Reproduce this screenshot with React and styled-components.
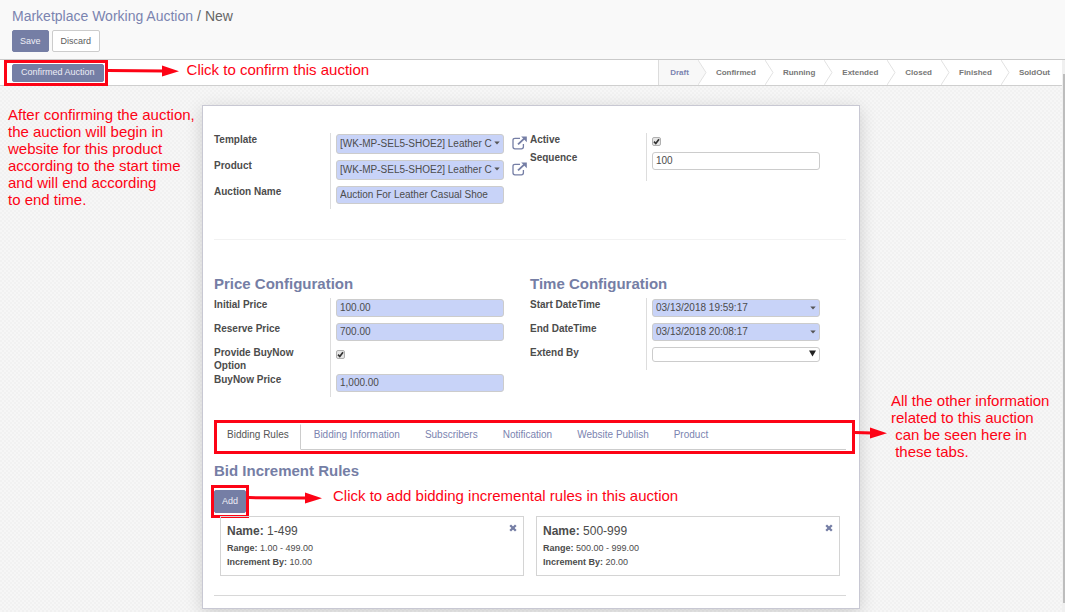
import React from 'react';
import styled, { createGlobalStyle } from 'styled-components';

const button = '#757ea5';
const red = '#fd0315';

const GlobalStyle = createGlobalStyle`
  * { box-sizing: border-box; }
  body {
    margin: 0;
    background: #f4f4f4;
    color: #4c4c4c;
    font-family: "Liberation Sans", Arial, sans-serif;
    font-size: 10px;
    line-height: 13px;
  }
  button, input, select { font: inherit; color: inherit; margin: 0; }
`;

const Shell = styled.div`
  display: flex;
  flex-direction: column;
  min-height: 100vh;
`;

const Header = styled.header`
  display: flex;
  flex-direction: column;
  gap: 5px;
  padding: 8px 12px 7px;
  background: #f9f9f9;
  border-bottom: 1px solid #cacaca;
`;

const Breadcrumb = styled.nav`
  display: flex;
  gap: 4px;
  font-size: 14px;
  line-height: 17px;
  color: #666;
  a { color: #7b84b0; text-decoration: none; }
`;

const Actions = styled.div`
  display: flex;
  gap: 3px;
`;

const Button = styled.button`
  height: ${(p) => p.$height || 22}px;
  padding: 0 ${(p) => p.$pad || 7}px;
  border: 1px solid ${(p) => (p.$plain ? '#ccc' : button)};
  border-radius: 2px;
  background: ${(p) => (p.$plain ? '#fff' : button)};
  color: ${(p) => (p.$plain ? '#5c5c5c' : '#eeeef6')};
  font-size: 9px;
  line-height: 11px;
  white-space: nowrap;
`;

const Scroller = styled.div`
  flex: 1;
  display: grid;
  grid-template-columns: minmax(0, 1fr) 3px;
`;

const Track = styled.div`
  background: #f0f0f0;
  padding: 14px 0 9px 1px;
  display: flex;
`;

const Thumb = styled.div`
  flex: 1;
  background: #bdbdbd;
`;

const Body = styled.div`
  display: flex;
  flex-direction: column;
`;

const StatusBar = styled.div`
  display: flex;
  justify-content: space-between;
  align-items: stretch;
  height: 26px;
  padding-left: 12px;
  background: #fff;
  border-bottom: 1px solid #cfcfcf;
`;

const StatusActions = styled.div`
  display: flex;
  align-items: center;
`;

const Marked = styled.div`
  position: relative;
  display: flex;
`;

const Frame = styled.div`
  position: absolute;
  inset: ${(p) => p.$inset};
  border: 3px solid ${red};
  pointer-events: none;
`;

const Callout = styled.div`
  position: absolute;
  left: calc(100% + ${(p) => p.$offset}px);
  top: -3px;
  display: flex;
  align-items: center;
  gap: ${(p) => p.$gap}px;
  color: ${red};
  font-size: 15px;
  line-height: 17px;
  white-space: nowrap;
  svg { display: block; flex: none; }
  p { margin: 0 0 4px; }
`;

const Steps = styled.ol`
  display: flex;
  margin: 0;
  padding: 0;
  list-style: none;
  border-left: 1px solid #dcdcdc;
  font-size: 8px;
  font-weight: bold;
  color: #777;
`;

const Step = styled.li`
  display: flex;
  align-items: stretch;
  background: #fff;
  color: ${(p) => (p.$first ? '#7b84b0' : 'inherit')};
`;

const StepName = styled.span`
  display: flex;
  align-items: center;
  padding: 0 ${(p) => (p.$last ? 12 : 9)}px 0 ${(p) => (p.$first ? 11 : 9)}px;
  background: ${(p) => (p.$first ? '#f8f8f8' : '#fff')};
`;

const Chevron = styled.svg`
  display: block;
  flex: none;
  width: 9px;
  height: 25px;
`;

const Canvas = styled.main`
  flex: 1;
  display: grid;
  grid-template-columns: minmax(0, 1fr) 658px minmax(0, 1fr);
  align-items: start;
  padding: 19px 0 3px;
  background: repeating-conic-gradient(#f1f1f1 0 25%, #f6f6f6 0 50%) 0 0 / 4px 4px;
`;

const Note = styled.aside`
  position: relative;
  color: ${red};
  font-size: 15px;
  line-height: 17px;
  white-space: pre;
  padding: ${(p) => p.$pad};
`;

const NoteArrow = styled.div`
  position: absolute;
  left: -5px;
  top: 322px;
  svg { display: block; }
`;

const Sheet = styled.section`
  min-height: 504px;
  padding: 27px 13px 12px 11px;
  background: #fff;
  border: 1px solid #c8c8d3;
  box-shadow: 0 4px 16px rgba(0, 0, 0, 0.16);
`;

const Columns = styled.div`
  display: grid;
  grid-template-columns: 1fr 1fr;
  align-items: start;
`;

const Group = styled.div`
  display: flex;
  flex-direction: column;
`;

const Row = styled.div`
  display: grid;
  grid-template-columns: 116px minmax(0, 1fr);
  label { font-weight: bold; padding-bottom: 1px; padding-right: 30px; }
`;

const Field = styled.div`
  display: flex;
  align-items: flex-start;
  gap: 8px;
  padding: 1px 0 ${(p) => p.$bottom || 5}px 5px;
  border-left: 1px solid #ddd;
`;

const Control = styled.div`
  position: relative;
  width: 168px;
`;

const TextInput = styled.input`
  display: block;
  width: 100%;
  height: ${(p) => p.$height || 18}px;
  padding: 0 3px 2px;
  border: 1px solid #ccc;
  border-radius: 3px;
  background: ${(p) => (p.$required ? '#c8d3f8' : '#fff')};
`;

const Select = styled.select`
  display: block;
  appearance: none;
  width: 100%;
  height: 15px;
  padding: 0 3px;
  border: 1px solid #ccc;
  border-radius: 3px;
  background: #fff;
`;

const Caret = styled.svg`
  position: absolute;
  right: 4px;
  top: ${(p) => p.$top}px;
  pointer-events: none;
`;

const Check = styled.input`
  appearance: none;
  width: 9px;
  height: 9px;
  border: 1px solid #b0b0b0;
  border-radius: 2px;
  background: #e6e6e6;
  display: block;
`;

const CheckWrap = styled.div`
  position: relative;
  margin-top: 3px;
  svg { position: absolute; inset: 0; pointer-events: none; }
`;

const LinkButton = styled.button`
  display: flex;
  padding: 0;
  margin-top: 2px;
  border: 0;
  background: none;
  color: ${button};
`;

const Rule = styled.hr`
  margin: ${(p) => p.$margin};
  border: 0;
  border-top: 1px solid ${(p) => p.$color};
`;

const Title = styled.h2`
  margin: 0 0 5px;
  font-size: 15px;
  line-height: 18px;
  color: ${button};
`;

const TabFrame = styled.div`
  position: relative;
  margin: 27px 0 12px;
`;

const Tabs = styled.div`
  display: flex;
  border-bottom: 1px solid #ccc;
`;

const Tab = styled.button`
  height: 26px;
  margin-bottom: -1px;
  padding: 0 11px 6px 12px;
  border: 1px solid transparent;
  border-color: ${(p) => (p.$active ? 'transparent #ccc #fff transparent' : 'transparent')};
  background: none;
  color: ${(p) => (p.$active ? '#555' : '#7b84b0')};
  white-space: nowrap;
`;

const AddRow = styled.div`
  display: flex;
  margin: 10px 0 3px;
`;

const Cards = styled.div`
  display: grid;
  grid-template-columns: 1fr 1fr;
  gap: 12px;
  padding: 0 6px;
`;

const Card = styled.article`
  position: relative;
  min-height: 60px;
  padding: 7px 6px 6px;
  border: 1px solid #d4d4d4;
  font-size: 9px;
  h3 { margin: 0 0 2px; font-size: 12px; line-height: 15px; font-weight: normal; }
  p { margin: 0; line-height: 14px; }
`;

const Remove = styled.button`
  position: absolute;
  right: 6px;
  top: 7px;
  display: flex;
  padding: 0;
  border: 0;
  background: none;
  color: ${button};
`;

function Arrow({ length }) {
  return (
    <svg width={length} height="12" viewBox={`0 0 ${length} 12`} aria-hidden="true">
      <path d={`M0 5.6L${length - 15} 6`} stroke={red} strokeWidth="3" />
      <path d={`M${length - 17} 0.5L${length} 6.2L${length - 17} 11.5Z`} fill={red} />
    </svg>
  );
}

function ExternalLink() {
  return (
    <svg width="15" height="14" viewBox="0 0 15 14" fill="none" stroke="currentColor" aria-hidden="true">
      <path d="M8 2.3H3Q1 2.3 1 4.3V10.8Q1 12.8 3 12.8H9.4Q11.4 12.8 11.4 10.8V8" strokeWidth="1.3" />
      <path d="M6 8.4L12.2 2.6" strokeWidth="1.9" />
      <path d="M9.2 0.6H14.8V6.2Z" fill="currentColor" stroke="none" />
    </svg>
  );
}

function DownCaret({ top, big }) {
  return big ? (
    <Caret $top={top} width="7" height="7" viewBox="0 0 7 7"><path d="M0 0.5H7L3.5 6.5Z" fill="#222" /></Caret>
  ) : (
    <Caret $top={top} width="6" height="4" viewBox="0 0 6 4"><path d="M0.3 0.5H5.7L3 3.6Z" fill="#555" /></Caret>
  );
}

function TextRow({ id, label, value, required, caret, bottom }) {
  return (
    <Row>
      <label htmlFor={id}>{label}</label>
      <Field $bottom={bottom}>
        <Control>
          <TextInput id={id} defaultValue={value} $required={required} />
          {caret && <DownCaret top={7} />}
        </Control>
      </Field>
    </Row>
  );
}

function LookupRow({ id, label, value }) {
  return (
    <Row>
      <label htmlFor={id}>{label}</label>
      <Field>
        <Control>
          <TextInput id={id} defaultValue={value} $required $height={20} />
          <DownCaret top={7} />
        </Control>
        <LinkButton type="button" aria-label={`Open ${label}`}><ExternalLink /></LinkButton>
      </Field>
    </Row>
  );
}

function CheckRow({ id, label }) {
  return (
    <Row>
      <label htmlFor={id}>{label}</label>
      <Field>
        <CheckWrap>
          <Check id={id} type="checkbox" defaultChecked />
          <svg width="9" height="9" viewBox="0 0 9 9"><path d="M2 4.6L3.8 6.5L7 2.2" fill="none" stroke="#333" strokeWidth="1.7" /></svg>
        </CheckWrap>
      </Field>
    </Row>
  );
}

const steps = ['Draft', 'Confirmed', 'Running', 'Extended', 'Closed', 'Finished', 'SoldOut'];
const tabs = ['Bidding Rules', 'Bidding Information', 'Subscribers', 'Notification', 'Website Publish', 'Product'];
const rules = [
  { name: '1-499', range: '1.00 - 499.00', by: '10.00' },
  { name: '500-999', range: '500.00 - 999.00', by: '20.00' },
];

export default function App() {
  return (
    <Shell>
      <GlobalStyle />
      <Header>
        <Breadcrumb>
          <a href="#auctions">Marketplace Working Auction</a>
          <span>/</span>
          <span>New</span>
        </Breadcrumb>
        <Actions>
          <Button type="button">Save</Button>
          <Button type="button" $plain $pad={8}>Discard</Button>
        </Actions>
      </Header>
      <Scroller>
        <Body>
          <StatusBar>
            <StatusActions>
              <Marked>
                <Button type="button" $height={18} $pad={8}>Confirmed Auction</Button>
                <Frame $inset="-4px -4px -4px -8px" />
                <Callout $offset={4} $gap={8}>
                  <Arrow length={71} />
                  <p>Click to confirm this auction</p>
                </Callout>
              </Marked>
            </StatusActions>
            <Steps>
              {steps.map((s, i) => {
                const last = i === steps.length - 1;
                return (
                  <Step key={s} $first={i === 0}>
                    <StepName $first={i === 0} $last={last}>{s}</StepName>
                    {!last && (
                      <Chevron viewBox="0 0 9 25">
                        {i === 0 && <path d="M0 0L8 12.5L0 25Z" fill="#f8f8f8" />}
                        <path d="M0 0L8 12.5L0 25" fill="none" stroke="#e2e2e2" />
                      </Chevron>
                    )}
                  </Step>
                );
              })}
            </Steps>
          </StatusBar>
          <Canvas>
            <Note $pad="1px 0 0 8px">
              {'After confirming the auction,\nthe auction will begin in\nwebsite for this product\naccording to the start time\nand will end according\nto end time.'}
            </Note>
            <Sheet>
              <Columns>
                <Group>
                  <LookupRow id="template" label="Template" value="[WK-MP-SEL5-SHOE2] Leather C" />
                  <LookupRow id="product" label="Product" value="[WK-MP-SEL5-SHOE2] Leather C" />
                  <TextRow id="name" label="Auction Name" value="Auction For Leather Casual Shoe" required />
                </Group>
                <Group>
                  <CheckRow id="active" label="Active" />
                  <TextRow id="sequence" label="Sequence" value="100" bottom={11} />
                </Group>
              </Columns>
              <Rule $margin="30px 0 35px" $color="#f2f2f2" />
              <Columns>
                <Group>
                  <Title>Price Configuration</Title>
                  <TextRow id="initial" label="Initial Price" value="100.00" required />
                  <TextRow id="reserve" label="Reserve Price" value="700.00" required />
                  <CheckRow id="buynow" label="Provide BuyNow Option" />
                  <TextRow id="buyprice" label="BuyNow Price" value="1,000.00" required />
                </Group>
                <Group>
                  <Title>Time Configuration</Title>
                  <TextRow id="start" label="Start DateTime" value="03/13/2018 19:59:17" required caret />
                  <TextRow id="end" label="End DateTime" value="03/13/2018 20:08:17" required caret />
                  <Row>
                    <label htmlFor="extend">Extend By</label>
                    <Field $bottom={8}>
                      <Control>
                        <Select id="extend" defaultValue=""><option value="" /></Select>
                        <DownCaret top={3} big />
                      </Control>
                    </Field>
                  </Row>
                </Group>
              </Columns>
              <TabFrame>
                <Tabs role="tablist">
                  {tabs.map((t, i) => (
                    <Tab key={t} type="button" role="tab" aria-selected={i === 0} $active={i === 0}>{t}</Tab>
                  ))}
                </Tabs>
                <Frame $inset="-4px -9px -4px 0" />
              </TabFrame>
              <Title>Bid Increment Rules</Title>
              <AddRow>
                <Marked>
                  <Button type="button" $height={23}>Add</Button>
                  <Frame $inset="-5px -3px -5px -3px" />
                  <Callout $offset={3} $gap={11}>
                    <Arrow length={73} />
                    <p>Click to add bidding incremental rules in this auction</p>
                  </Callout>
                </Marked>
              </AddRow>
              <Cards>
                {rules.map((r) => (
                  <Card key={r.name}>
                    <h3><b>Name:</b> {r.name}</h3>
                    <p><b>Range:</b> {r.range}</p>
                    <p><b>Increment By:</b> {r.by}</p>
                    <Remove type="button" aria-label={`Remove ${r.name}`}>
                      <svg width="8" height="8" viewBox="0 0 8 8"><path d="M1.2 1.2L6.8 6.8M6.8 1.2L1.2 6.8" stroke="currentColor" strokeWidth="2.3" /></svg>
                    </Remove>
                  </Card>
                ))}
              </Cards>
              <Rule $margin="19px 0 0" $color="#d8d8d8" />
            </Sheet>
            <Note $pad="287px 0 0 31px">
              {'All the other information\nrelated to this auction\n can be seen here in\n these tabs.'}
              <NoteArrow><Arrow length={32} /></NoteArrow>
            </Note>
          </Canvas>
        </Body>
        <Track><Thumb /></Track>
      </Scroller>
    </Shell>
  );
}
